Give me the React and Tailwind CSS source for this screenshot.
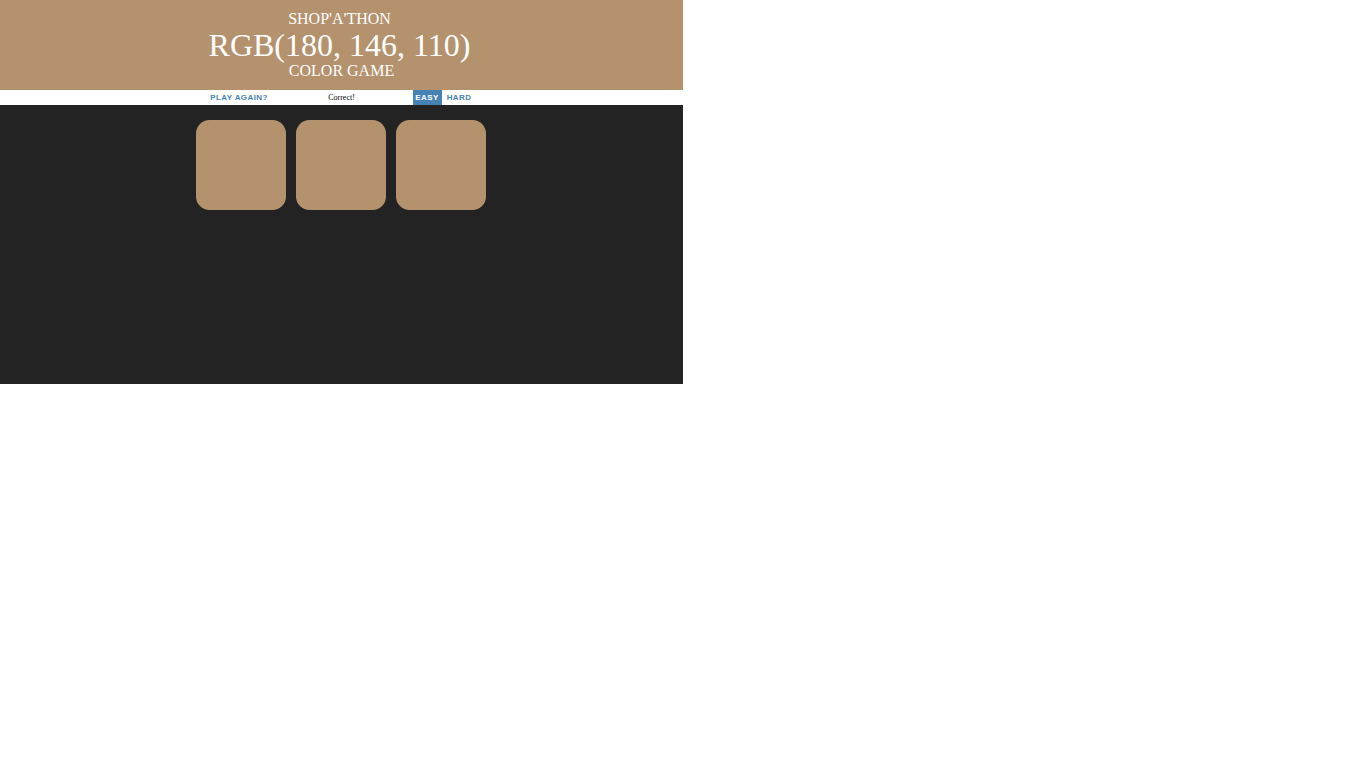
const squares = ["First square", "Second square", "Third square"];

const control =
  "h-full text-[8px] leading-[15px] font-bold uppercase tracking-wider font-['Liberation_Sans',sans-serif]";

export default function App() {
  return (
    <div className="min-h-screen bg-white font-['Liberation_Serif',serif]">
      <div className="flex min-h-[50vh] w-1/2 flex-col bg-[#232323]">
        <header className="bg-[#b4926e] py-2.5 text-center text-white">
          <h1 className="text-base leading-[18px] uppercase">
            Shop'a'thon&nbsp;
            <span className="block text-[32px] leading-[34px]">
              RGB(180, 146, 110)<span className="text-base leading-[18px]">&nbsp;</span>
            </span>
            Color Game
          </h1>
        </header>
        <nav className="h-[15px] bg-white">
          <div className="mx-auto grid h-full w-[270px] grid-cols-[1fr_auto_1fr] items-center">
            <button type="button" className={`${control} w-[65px] justify-self-start text-[#4682b4]`}>
              Play again?
            </button>
            <span role="status" className="text-[8px] leading-[15px] text-black">
              Correct!
            </span>
            <div className="flex h-full justify-self-end">
              <button type="button" aria-pressed="true" className={`${control} w-[29px] bg-[#4682b4] text-white`}>
                Easy
              </button>
              <button type="button" aria-pressed="false" className={`${control} w-[35px] text-[#4682b4]`}>
                Hard
              </button>
            </div>
          </div>
        </nav>
        <main className="mx-auto mt-[15px] grid w-[291px] grid-cols-[repeat(3,90px)] gap-2.5">
          {squares.map((name) => (
            <button
              key={name}
              type="button"
              aria-label={name}
              className="aspect-square rounded-[15%] bg-[#b4926e]"
            />
          ))}
        </main>
      </div>
    </div>
  );
}
